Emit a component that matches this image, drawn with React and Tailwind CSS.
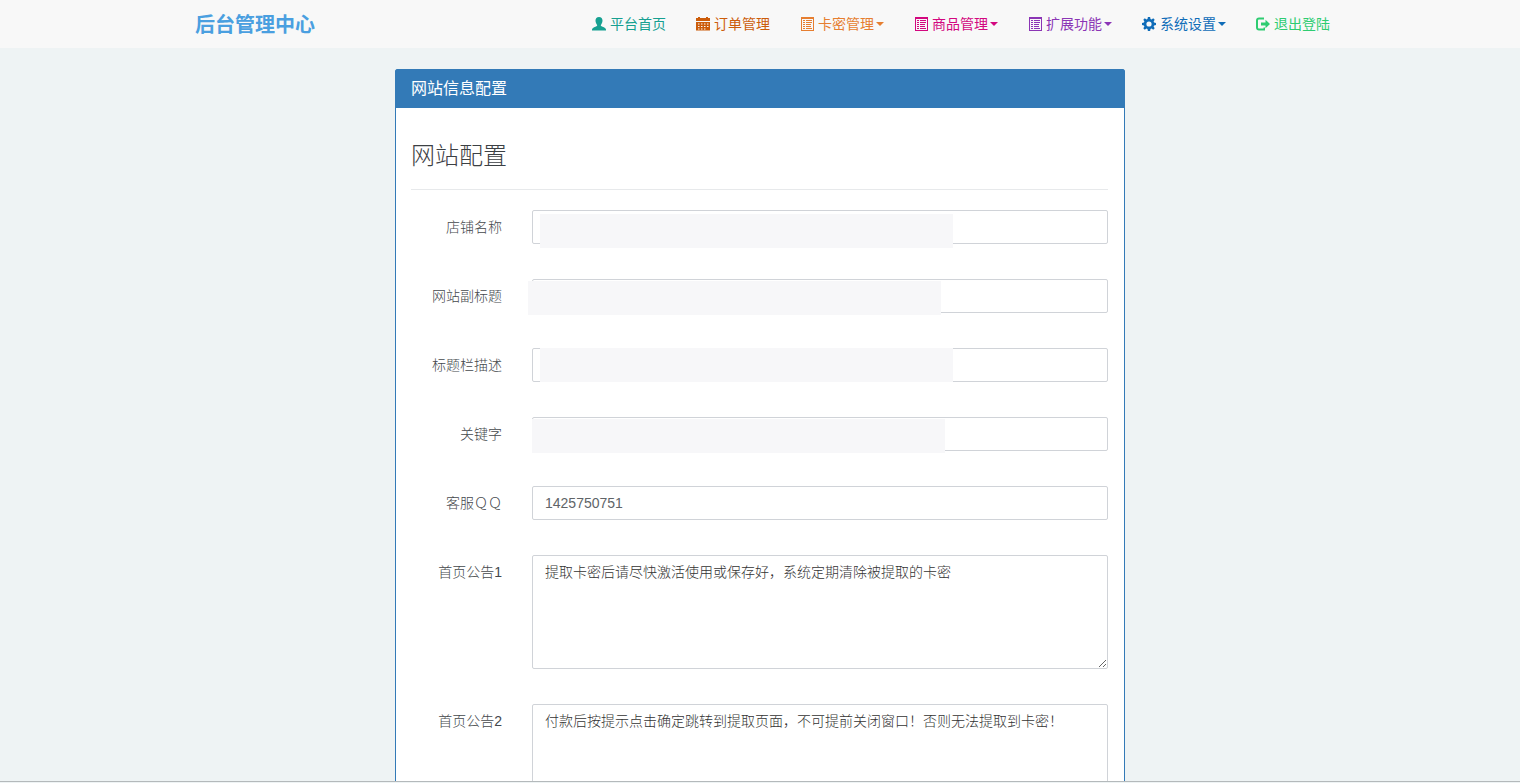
import { useState } from "react";

/* ---------------- ICONS ---------------- */
function Icon({ children }) {
  return (
    <svg
      viewBox="0 0 14 14"
      fill="currentColor"
      aria-hidden="true"
      className="h-3.5 w-3.5 shrink-0"
    >
      {children}
    </svg>
  );
}

function UserIcon() {
  return (
    <Icon>
      <path d="M7 0C4.700 0 3.500 1.500 3.500 3.600c0 1.400.5 2.900 1.300 3.800.4.500.5.900.3 1.400-.2.400-.9.700-1.700 1C1.600 10.600 0 11.200 0 12.600V13.500h14v-.9c0-1.400-1.600-2-3.400-2.800-.8-.3-1.500-.6-1.700-1-.2-.5-.1-.9.3-1.400.8-.9 1.300-2.400 1.300-3.800C10.500 1.500 9.300 0 7 0z" />
    </Icon>
  );
}

function CalendarIcon() {
  return (
    <Icon>
      <path
        fillRule="evenodd"
        d="M0 1h2V0h2v1h6V0h2v1h2v3H0zM0 5h14v8.500H0zM2 6.500v1h1.500v-1zM5 6.500v1h1.500v-1zM8 6.500v1h1.500v-1zM11 6.500v1h1.500v-1zM2 9v1h1.500V9zM5 9v1h1.500V9zM8 9v1h1.500V9zM11 9v1h1.500V9zM2 11.500v1h1.500v-1zM5 11.500v1h1.500v-1zM8 11.500v1h1.500v-1z"
      />
    </Icon>
  );
}

function ListIcon() {
  return (
    <Icon>
      <path
        fillRule="evenodd"
        d="M1 0h13v14H1zM2 2v11h11V2z"
      />
      <path d="M3 3h2v1H3zM6 3h6v1H6zM3 5h2v1H3zM6 5h6v1H6zM3 7h2v1H3zM6 7h5v1H6zM3 9h2v1H3zM6 9h5v1H6zM3 11h2v1H3zM6 11h6v1H6z" />
    </Icon>
  );
}

function CogIcon() {
  return (
    <Icon>
      <path
        fillRule="evenodd"
        d="M5.900 0h2.200l.4 1.900 1.100.5L11.200 1.300l1.500 1.500-1.100 1.600.5 1.100 1.900.4v2.200l-1.900.4-.5 1.100 1.100 1.600-1.500 1.500-1.600-1.100-1.100.5L8.100 14H5.900l-.4-1.900-1.100-.5-1.600 1.100-1.500-1.500 1.100-1.600-.5-1.100L0 8.100V5.900l1.900-.4.5-1.100L1.300 2.800l1.500-1.500 1.600 1.100 1.100-.5zM7 4.400a2.600 2.600 0 1 0 0 5.200 2.600 2.600 0 0 0 0-5.200z"
      />
    </Icon>
  );
}

function LogoutIcon() {
  return (
    <Icon>
      <path d="M8 .5H3C1.200.5 0 1.700 0 3.500v7c0 1.800 1.200 3 3 3h6v-3H7.500v1H3.200c-.8 0-1.200-.4-1.200-1.200V3.700c0-.8.4-1.200 1.200-1.200H8z" />
      <path d="M9.500 2.800 14 7l-4.500 4.200V8.500H5v-3h4.500z" />
    </Icon>
  );
}

/* ---------------- DATA ---------------- */
const navItems = [
  { label: "平台首页", icon: UserIcon, color: "text-[#16a091]" },
  { label: "订单管理", icon: CalendarIcon, color: "text-[#cc5c0a]" },
  { label: "卡密管理", icon: ListIcon, color: "text-[#e67e30]", menu: true },
  { label: "商品管理", icon: ListIcon, color: "text-[#d3077f]", menu: true },
  { label: "扩展功能", icon: ListIcon, color: "text-[#8b35b5]", menu: true },
  { label: "系统设置", icon: CogIcon, color: "text-[#0f6cb8]", menu: true },
  { label: "退出登陆", icon: LogoutIcon, color: "text-[#2ecc71]" },
];

const fields = [
  { id: "name", label: "店铺名称", mask: "left-2 top-1" },
  { id: "subtitle", label: "网站副标题", mask: "-left-1 top-0.5" },
  { id: "description", label: "标题栏描述", mask: "left-2 top-0" },
  { id: "keywords", label: "关键字", mask: "left-0 top-0.5" },
  { id: "qq", label: "客服ＱＱ" },
  { id: "notice1", label: "首页公告1", multiline: true },
  { id: "notice2", label: "首页公告2", multiline: true },
];

const controlStyle =
  "block w-full rounded-xs border border-[#d0d3d8] bg-white px-3 py-1.5 text-sm focus:border-[#66afe9] focus:outline-none";

/* ---------------- NAVBAR ---------------- */
function NavItem({ item }) {
  const ItemIcon = item.icon;
  const style = `flex items-center gap-1 px-[15px] py-3.5 ${item.color}`;

  if (item.menu) {
    return (
      <button type="button" aria-haspopup="menu" className={style}>
        <ItemIcon />
        <span className="flex items-center gap-0.5">
          {item.label}
          <span className="border-x-4 border-t-4 border-x-transparent border-t-current" />
        </span>
      </button>
    );
  }

  return (
    <a href="#" className={style}>
      <ItemIcon />
      {item.label}
    </a>
  );
}

function Navbar() {
  return (
    <header className="shrink-0 bg-[#f8f8f8]">
      <nav className="mx-auto flex h-12 w-full max-w-[1170px] items-center justify-between pl-5">
        <a href="#" className="pt-0.5 text-xl font-bold text-[#4a9fe0]">
          后台管理中心
        </a>
        <ul className="flex text-sm font-normal">
          {navItems.map((item) => (
            <li key={item.label}>
              <NavItem item={item} />
            </li>
          ))}
        </ul>
      </nav>
    </header>
  );
}

/* ---------------- FORM ROW ---------------- */
function FormRow({ field, value, onChange }) {
  return (
    <div className="flex gap-[30px]">
      <label
        htmlFor={field.id}
        className="w-[91px] shrink-0 py-[7px] text-right text-sm text-[#44484c]"
      >
        {field.label}
      </label>
      <div className="relative min-w-0 flex-1">
        {field.multiline ? (
          <textarea
            id={field.id}
            value={value}
            onChange={onChange}
            className={`${controlStyle} h-[114px] resize-y text-[#333]`}
          />
        ) : (
          <input
            id={field.id}
            type="text"
            value={value}
            onChange={onChange}
            className={`${controlStyle} h-[34px] text-[#606468]`}
          />
        )}
        {field.mask && (
          <div
            className={`pointer-events-none absolute h-[34px] w-[413px] bg-[#f7f7f9] ${field.mask}`}
          />
        )}
      </div>
    </div>
  );
}

/* ---------------- PAGE ---------------- */
export default function App() {
  const [config, setConfig] = useState({
    name: "",
    subtitle: "",
    description: "",
    keywords: "",
    qq: "1425750751",
    notice1: "提取卡密后请尽快激活使用或保存好，系统定期清除被提取的卡密",
    notice2:
      "付款后按提示点击确定跳转到提取页面，不可提前关闭窗口！否则无法提取到卡密！",
  });

  const updateField = (id, value) => {
    setConfig((prev) => ({ ...prev, [id]: value }));
  };

  return (
    <div className="flex h-screen flex-col bg-[#eef3f4] font-['Liberation_Sans','Noto_Sans_CJK_SC',sans-serif] font-light">
      <Navbar />

      <main className="min-h-0 flex-1 overflow-hidden border-b border-[#b4b9bb] pt-[21px]">
        <section className="mx-auto w-full max-w-[730px] rounded-xs border border-[#337ab7] bg-white">
          <h1 className="bg-[#337ab7] px-[15px] py-[7px] text-base font-normal text-white">
            网站信息配置
          </h1>

          <form className="pr-4 pb-8 pl-[15px]">
            <h2 className="border-b border-[#e7e9eb] pt-8 pb-[17px] text-2xl text-[#3c4044]">
              网站配置
            </h2>

            <div className="mt-5 space-y-[35px]">
              {fields.map((field) => (
                <FormRow
                  key={field.id}
                  field={field}
                  value={config[field.id]}
                  onChange={(e) => updateField(field.id, e.target.value)}
                />
              ))}
            </div>
          </form>
        </section>
      </main>
      <div className="h-px shrink-0" />
    </div>
  );
}
